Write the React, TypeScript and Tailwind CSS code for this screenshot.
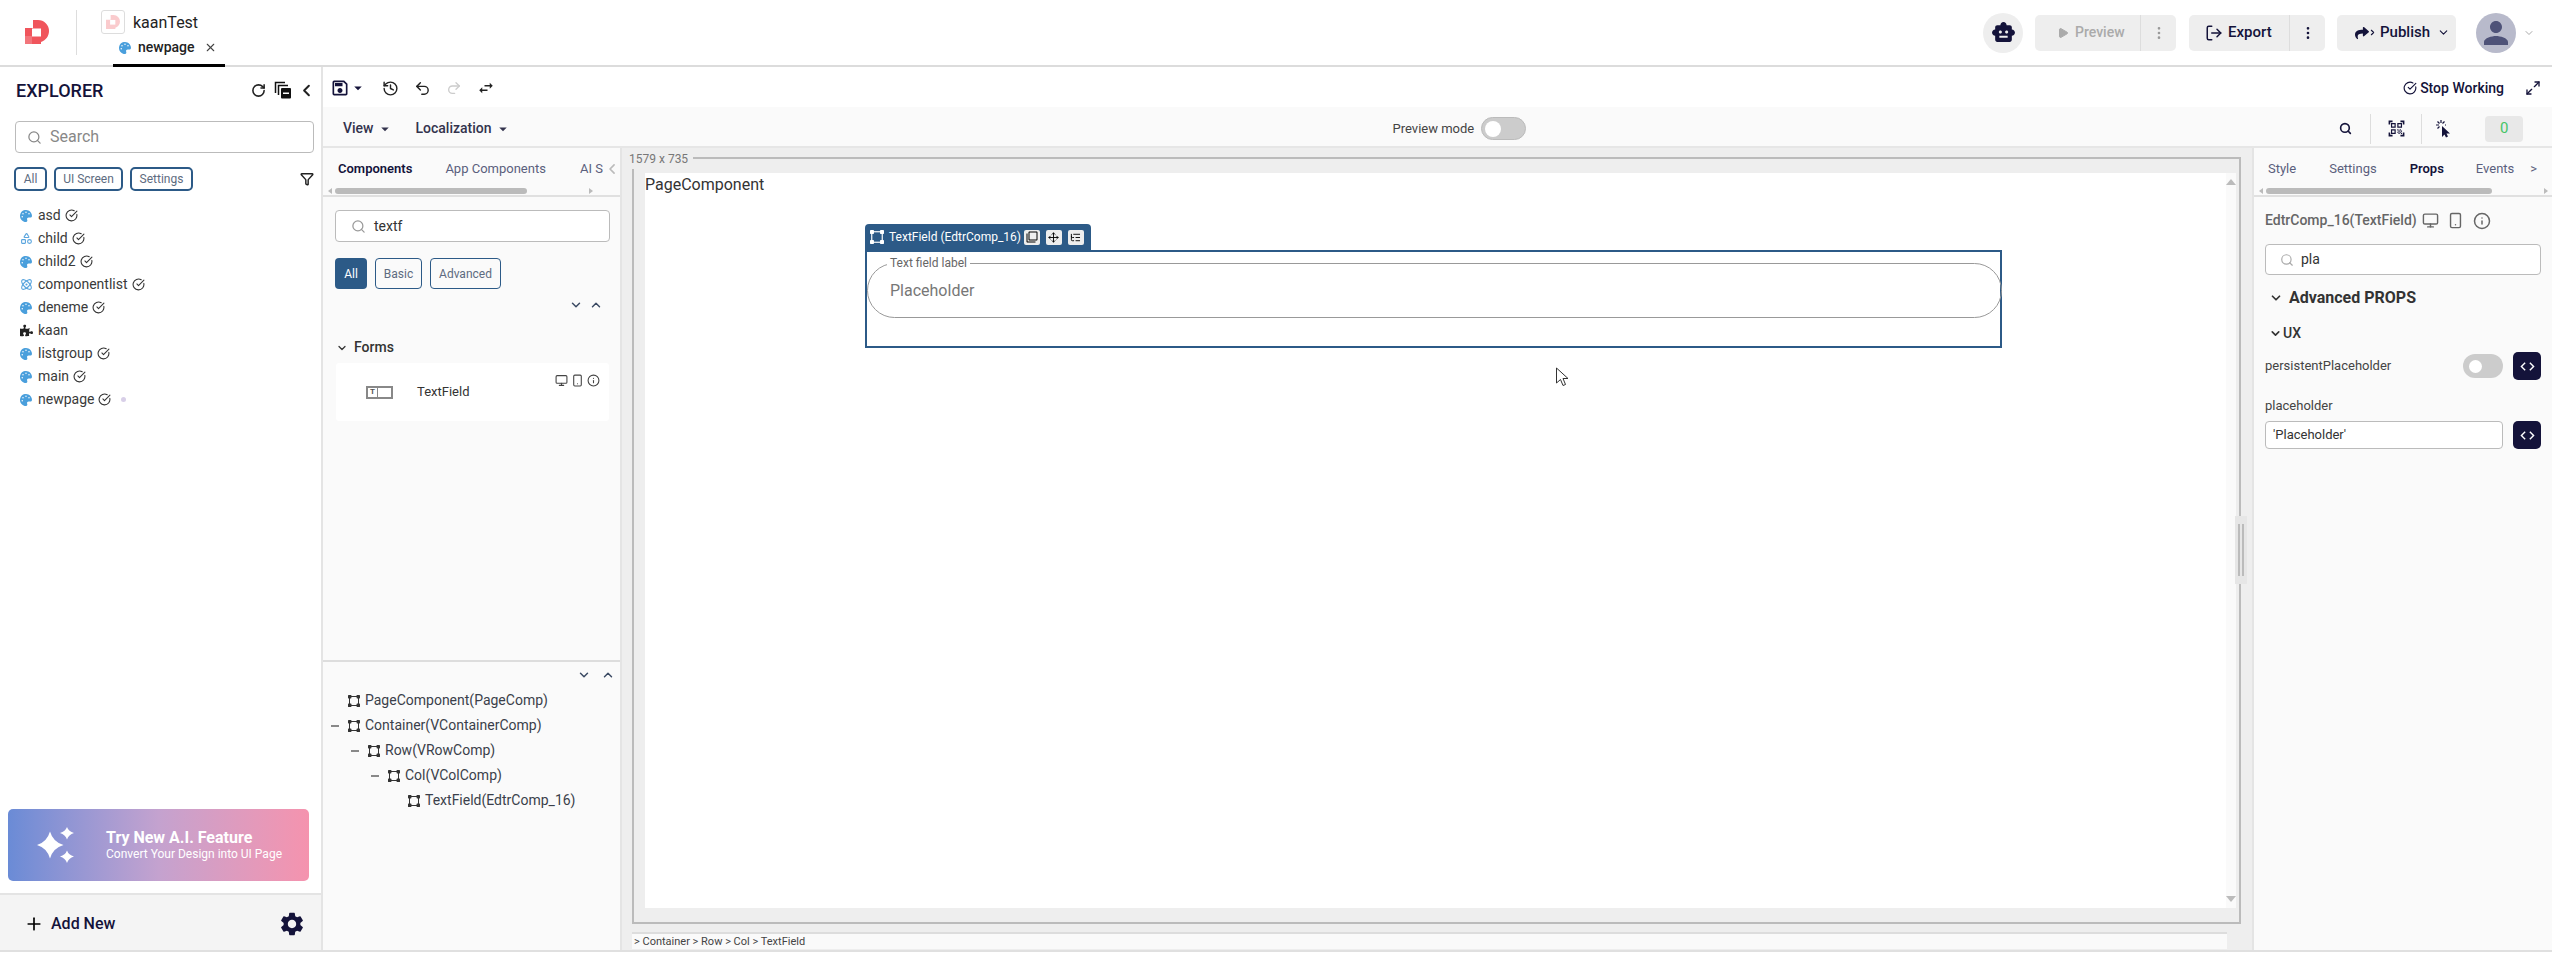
import React from "react";
import {
  RotateCw, ChevronLeft, ChevronRight, ChevronDown, ChevronUp, Search, CircleCheckBig, Shapes, Atom, X, History, Undo2, Redo2,
  Filter, Monitor, Smartphone, Info, Plus, Play, EllipsisVertical, LogOut, Move, ListTree, Maximize2,
} from "lucide-react";
import { FaPalette, FaPuzzlePiece, FaShare } from "react-icons/fa";
import { MdSmartToy, MdSettings, MdOutlineSave, MdSwapHoriz, MdOutlineQrCodeScanner, MdPerson, MdArrowDropDown, MdCode, MdFilterNone } from "react-icons/md";

const NodeIcon = ({ c = "#333", s = 12 }: { c?: string; s?: number }) => (
  <svg width={s} height={s} viewBox="0 0 12 12" className="shrink-0">
    <rect x="1.5" y="1.5" width="9" height="9" fill="none" stroke={c} strokeWidth="1" />
    <rect x="0" y="0" width="3.4" height="3.4" rx="0.6" fill={c} />
    <rect x="8.6" y="0" width="3.4" height="3.4" rx="0.6" fill={c} />
    <rect x="0" y="8.6" width="3.4" height="3.4" rx="0.6" fill={c} />
    <rect x="8.6" y="8.6" width="3.4" height="3.4" rx="0.6" fill={c} />
  </svg>
);

const Logo = () => (
  <svg width="24" height="24" viewBox="0 0 24 24">
    <path d="M8 0h5a11 11 0 0 1 11 11c0 5-3 9-8 11v2H0V8h8z" fill="#f0555c" />
    <path d="M0 16h7v8H0z" fill="#f2757b" />
    <rect x="7" y="8.500" width="9" height="8" fill="#fff" />
  </svg>
);

const Palette = () => <FaPalette size={12} color="#4a9fdc" className="shrink-0" />;
const files: [string, React.ReactNode, boolean][] = [
  ["asd", <Palette />, true],
  ["child", <Shapes size={13} color="#5aa5de" />, true],
  ["child2", <Palette />, true],
  ["componentlist", <Atom size={13} color="#5aa5de" />, true],
  ["deneme", <Palette />, true],
  ["kaan", <FaPuzzlePiece size={13} color="#222" />, false],
  ["listgroup", <Palette />, true],
  ["main", <Palette />, true],
  ["newpage", <Palette />, true],
];

const Chip = ({ t, w }: { t: string; w: string }) => (
  <div className={`h-[24px] ${w} flex items-center justify-center rounded-[5px] border-2 border-[#2c5a87] text-[12px] text-[#5d6b80]`}>{t}</div>
);

const CodeBtn = () => (
  <div className="w-[28px] h-[28px] rounded-[5px] bg-[#14133a] flex items-center justify-center">
    <MdCode size={17} color="#fff" />
  </div>
);

const ScrollBar = ({ right, thumb }: { right: string; thumb: string }) => (
  <div className="h-[9px] flex items-center pl-[5px] gap-[3px] relative">
    <div className="w-0 h-0 border-y-[3px] border-y-transparent border-r-[4px] border-r-[#bbb]" />
    <div className={`h-[6px] ${thumb} rounded-[3px] bg-[#bbb]`} />
    <div className={`absolute ${right} w-0 h-0 border-y-[3px] border-y-transparent border-l-[4px] border-l-[#bbb]`} />
  </div>
);

const Tree = ({ t, lvl, dash }: { t: string; lvl: string; dash?: boolean }) => (
  <div className={`h-[25px] flex items-center ${lvl} relative text-[14px] text-[#3a3f4a]`}>
    {dash && <div className="absolute -ml-[17px] w-[8px] h-[2px] bg-[#888]" />}
    <NodeIcon />
    <span className="ml-[5px]">{t}</span>
  </div>
);

export default function App() {
  return (
    <div className="w-[2552px] h-[954px] overflow-hidden bg-white flex flex-col font-['Roboto',sans-serif] text-[#222]">
      {/* header */}
      <header className="h-[67px] shrink-0 border-b-2 border-[#dcdcdc] flex items-center relative">
        <div className="ml-[25px] w-[24px] mt-[-1px]"><Logo /></div>
        <div className="ml-[27px] w-px h-[45px] bg-[#ddd] mt-[-1px]" />
        <div className="ml-[24px] self-stretch w-[300px] flex flex-col">
          <div className="flex items-center mt-[10px] h-[24px]">
            <div className="w-[24px] h-[24px] rounded-[3px] border border-[#ddd] flex items-center justify-center">
              <svg width="14" height="14" viewBox="0 0 24 24" opacity="0.3"><path d="M8 0h5a11 11 0 0 1 11 11c0 5-3 9-8 11v2H0V8h8z" fill="#f0555c" /><rect x="7" y="8.500" width="9" height="8" fill="#fff" /></svg>
            </div>
            <span className="ml-[8px] text-[16px] text-[#222] mt-[1px]">kaanTest</span>
          </div>
          <div className="mt-auto ml-[12px] w-[112px] h-[33px] border-b-[3px] border-black flex items-center pl-[6px] pb-[3px] -mb-[2px]">
            <Palette />
            <span className="ml-[7px] text-[14px] font-medium">newpage</span>
            <X size={13} className="ml-[9px] text-[#444]" />
          </div>
        </div>
        <div className="ml-auto flex items-center mr-[17px]">
          <div className="w-[40px] h-[40px] rounded-full bg-[#eee] flex items-center justify-center"><MdSmartToy size={25} color="#14133a" /></div>
          <div className="ml-[12px] w-[141px] h-[36px] rounded-[5px] bg-[#eee] flex items-center text-[#aaa]">
            <div className="w-[106px] border-r border-[#ddd] h-full flex items-center pl-[22px] text-[14px] font-medium">
              <Play size={12} fill="#aaa" className="mr-[6px]" />Preview
            </div>
            <EllipsisVertical size={16} className="ml-[10px]" color="#999" />
          </div>
          <div className="ml-[13px] w-[136px] h-[36px] rounded-[5px] bg-[#eee] flex items-center text-[#14133a]">
            <div className="w-[101px] border-r border-[#ddd] h-full flex items-center pl-[16px] text-[15px] font-medium">
              <LogOut size={18} className="mr-[5px]" />Export
            </div>
            <EllipsisVertical size={16} className="ml-[10px]" color="#14133a" />
          </div>
          <div className="ml-[12px] w-[119px] h-[36px] rounded-[5px] bg-[#eee] flex items-center pl-[18px] text-[15px] font-medium text-[#14133a]">
            <FaShare size={14} />
            <ChevronRight size={9} strokeWidth={3} className="-ml-[1px] mr-[3px]" />Publish
            <ChevronDown size={13} className="ml-[7px]" />
          </div>
          <div className="ml-[20px] w-[40px] h-[40px] rounded-full bg-[#b8bacb] flex items-center justify-center overflow-hidden"><MdPerson size={36} color="#4e5278" /></div>
          <ChevronDown size={12} className="ml-[7px] text-[#aaa]" />
        </div>
      </header>

      <div className="h-[885px] shrink-0 flex border-b-2 border-[#e0e0e0]">
        {/* sidebar */}
        <aside className="w-[323px] shrink-0 border-r-2 border-[#e4e4e4] flex flex-col">
          <div className="flex items-center h-[46px] pl-[16px] pr-[5px]">
            <span className="text-[18px] font-medium text-[#14133a]">EXPLORER</span>
            <RotateCw size={15} strokeWidth={2.5} className="ml-auto" />
            <svg width="18" height="18" viewBox="0 0 18 18" className="ml-[8px]">
              <path d="M1.500 12V1.500H11" fill="none" stroke="#111" strokeWidth="1.500" />
              <path d="M4.500 14V4.500H14" fill="none" stroke="#111" strokeWidth="1.500" />
              <rect x="7" y="7" width="10" height="10.500" rx="1" fill="#111" />
              <rect x="9" y="11.500" width="6" height="1.500" fill="#fff" />
            </svg>
            <ChevronLeft size={19} strokeWidth={2.5} className="ml-[5px]" />
          </div>
          <div className="mx-[15px] mt-[8px] h-[32px] w-[299px] rounded-[4px] border border-[#bbb] flex items-center pl-[11px] text-[16px] text-[#888]">
            <Search size={15} className="mr-[8px]" />Search
          </div>
          <div className="mt-[14px] pl-[14px] pr-[7px] flex items-center gap-[7px]">
            <Chip t="All" w="w-[33px]" />
            <Chip t="UI Screen" w="w-[69px]" />
            <Chip t="Settings" w="w-[63px]" />
            <Filter size={14} strokeWidth={2.5} className="ml-auto" />
          </div>
          <div className="mt-[13px] pl-[20px] flex flex-col">
            {files.map(([n, ic, ok]) => (
              <div key={n} className="h-[23px] flex items-center text-[14px] text-[#3a3a3a]">
                <span className="w-[18px] shrink-0 flex">{ic}</span>
                <span>{n}</span>
                {ok && <CircleCheckBig size={13} className="ml-[4px] text-[#333]" />}
                {n === "newpage" && <span className="ml-[10px] w-[5px] h-[5px] rounded-full bg-[#d8cfe8]" />}
              </div>
            ))}
          </div>
          <div className="mt-auto mx-[8px] mb-[12px] w-[301px] h-[72px] rounded-[5px] bg-gradient-to-r from-[#6a8bd6] via-[#c4a2cf] to-[#f593ae] flex items-center text-white">
            <svg width="37" height="36" viewBox="0 0 37 36" className="ml-[29px]" fill="#fff">
              <path d="M13 4.500Q16 15 26.500 18 16 21 13 31.500 10 21 0 18 10 15 13 4.500z" />
              <path d="M30 0q1.600 4.500 7 6-5.400 1.500-7 6.500-1.600-5-7-6.500 5.400-1.500 7-6z" />
              <path d="M30 23.500q1.600 4.500 7 6-5.400 1.500-7 6.500-1.600-5-7-6.500 5.400-1.500 7-6z" />
            </svg>
            <div className="ml-[32px] flex flex-col">
              <span className="text-[16px] font-bold leading-[19px]">Try New A.I. Feature</span>
              <span className="text-[12px] leading-[15px]">Convert Your Design into UI Page</span>
            </div>
          </div>
          <div className="h-[57px] bg-[#f4f4f4] border-t-2 border-[#e4e4e4] flex items-center pl-[24px] pr-[15px] pt-[3px] text-[16px] font-medium text-[#14133a]">
            <Plus size={20} className="text-black mr-[7px]" />Add New
            <MdSettings size={28} className="ml-auto" />
          </div>
        </aside>

        {/* main */}
        <main className="flex-1 min-w-0 flex flex-col">
          <div className="h-[40px] shrink-0 flex items-center pl-[7px] pr-[11px] pt-[2px]">
            <MdOutlineSave size={20} className="text-[#14133a]" />
            <MdArrowDropDown size={18} className="text-[#14133a] -ml-[1px]" />
            <History size={17} className="ml-[15px]" />
            <Undo2 size={17} className="ml-[15px]" />
            <Redo2 size={16} className="ml-[15px] text-[#ccc]" />
            <MdSwapHoriz size={18} className="ml-[15px]" />
            <div className="ml-auto flex items-center text-[14px] font-medium text-[#14133a]">
              <CircleCheckBig size={14} className="mr-[3px]" />Stop Working
            </div>
            <Maximize2 size={16} className="ml-[21px] text-[#14133a]" />
          </div>
          <div className="h-[41px] shrink-0 bg-[#fafafa] border-b-2 border-[#e6e6e6] flex items-center pl-[20px] pt-[4px] text-[14px] font-medium text-[#33334d]">
            <span>View</span><MdArrowDropDown size={18} className="ml-[2px]" />
            <span className="ml-[22px]">Localization</span><MdArrowDropDown size={18} className="ml-[2px]" />
            <span className="ml-[881px] text-[13px] font-normal text-[#444]">Preview mode</span>
            <div className="ml-[7px] w-[45px] h-[23px] rounded-full bg-[#ccc] border border-[#bbb] flex items-center pl-[3px]">
              <div className="w-[16px] h-[16px] rounded-full bg-white" />
            </div>
            <Search size={13} strokeWidth={3} className="ml-[813px] text-[#14133a]" />
            <div className="ml-[18px] w-px h-[30px] bg-[#ddd]" />
            <MdOutlineQrCodeScanner size={19} className="ml-[16px] text-[#14133a]" />
            <div className="ml-[15px] w-px h-[30px] bg-[#ddd]" />
            <svg width="16" height="18" viewBox="0 0 16 18" className="ml-[14px]">
              <path d="M6 6v11l2.500-2.500 1.500 3 2-1-1.500-3H14z" fill="#14133a" />
              <path d="M5 0v3M0 5h3M1.500 1.500l2 2M8.500 1.500l-2 2M1.500 8.500l2-2M10 5h-1" stroke="#14133a" strokeWidth="1.200" fill="none" />
            </svg>
            <div className="ml-[33px] w-[38px] h-[26px] rounded-[4px] bg-[#e8e8e8] flex items-center justify-center text-[15px] font-normal text-[#45c467]">0</div>
          </div>
          <div className="flex-1 min-h-0 flex">
            {/* components */}
            <section className="w-[299px] shrink-0 bg-[#fafafa] border-r-2 border-[#e4e4e4] flex flex-col">
              <div className="h-[49px] shrink-0 border-b-2 border-[#e0e0e0] flex flex-col overflow-hidden">
                <div className="h-[38px] shrink-0 flex items-center pl-[15px] pt-[3px] text-[13px] text-[#5a5f7d] relative whitespace-nowrap">
                  <span className="font-semibold text-[#14133a]">Components</span>
                  <span className="ml-[33px]">App Components</span>
                  <span className="ml-[34px]">AI S</span>
                  <ChevronLeft size={18} strokeWidth={2.5} className="ml-[1px] text-[#bbb]" />
                </div>
                <ScrollBar right="left-[266px]" thumb="w-[192px]" />
              </div>
              <div className="mx-[12px] mt-[13px] h-[32px] w-[275px] rounded-[4px] border border-[#bbb] bg-white flex items-center pl-[15px] text-[14px] text-[#333]">
                <Search size={15} className="mr-[8px] text-[#999]" />textf
              </div>
              <div className="mt-[16px] pl-[12px] flex gap-[8px] text-[12px]">
                <div className="w-[32px] h-[31px] rounded-[4px] bg-[#2c5a87] text-white flex items-center justify-center">All</div>
                <div className="w-[47px] h-[31px] rounded-[4px] border border-[#2c5a87] text-[#5d6b80] flex items-center justify-center">Basic</div>
                <div className="w-[71px] h-[31px] rounded-[4px] border border-[#2c5a87] text-[#5d6b80] flex items-center justify-center">Advanced</div>
              </div>
              <div className="mt-[9px] flex justify-end gap-[6px] pr-[17px] text-[#3b4a63]">
                <ChevronDown size={14} strokeWidth={2.5} /><ChevronUp size={14} strokeWidth={2.5} />
              </div>
              <div className="mt-[25px] pl-[13px] flex items-center text-[14px] font-medium text-[#333]">
                <ChevronDown size={12} strokeWidth={2.5} className="mr-[6px]" />Forms
              </div>
              <div className="mt-[5px] mx-[13px] w-[273px] h-[58px] rounded-[3px] bg-white flex items-center relative text-[13px] text-[#333]">
                <div className="ml-[30px] w-[27px] h-[13px] border-2 border-[#888] flex items-center">
                  <span className="text-[8px] leading-none font-bold w-[10px] h-full border-r border-[#888] flex items-center justify-center text-[#555]">T</span>
                </div>
                <span className="ml-[24px]">TextField</span>
                <div className="absolute right-[9px] top-[11px] flex items-center gap-[3px] text-[#444]">
                  <Monitor size={13} /><Smartphone size={13} /><Info size={13} />
                </div>
              </div>
              <div className="mt-auto h-[290px] shrink-0 border-t-2 border-[#ddd] flex flex-col">
                <div className="mt-[6px] flex justify-end gap-[10px] pr-[5px] text-[#3b4a63]">
                  <ChevronDown size={14} strokeWidth={2.5} /><ChevronUp size={14} strokeWidth={2.5} />
                </div>
                <div className="mt-[6px]">
                  <Tree t="PageComponent(PageComp)" lvl="pl-[25px]" />
                  <Tree t="Container(VContainerComp)" lvl="pl-[25px]" dash />
                  <Tree t="Row(VRowComp)" lvl="pl-[45px]" dash />
                  <Tree t="Col(VColComp)" lvl="pl-[65px]" dash />
                  <Tree t="TextField(EdtrComp_16)" lvl="pl-[85px]" />
                </div>
              </div>
            </section>

            {/* canvas */}
            <section className="flex-1 min-w-0 bg-[#eeeeee] pl-[10px] pr-[11px] pt-[9px] flex flex-col relative">
              <div className="h-[767px] shrink-0 border-2 border-[#bbb] pl-[11px] pr-[3px] pt-[14px] pb-[14px] relative">
                <div className="absolute -left-[7px] -top-[10px] bg-[#eeeeee] pl-[2px] pr-[5px] text-[12px] leading-[20px] text-[#777]">1579 x 735</div>
                <div className="h-full bg-white flex">
                  <div className="flex-1 min-w-0 relative">
                    <div className="text-[16px] leading-[24px] text-[#333]">PageComponent</div>
                    <div className="ml-[220px] mt-[53px] w-[1137px] h-[98px] border-[2px] border-[#2c5a87] relative">
                      <div className="absolute -left-[2px] -top-[28px] w-[226px] h-[26px] rounded-t-[4px] bg-[#2c5a87] flex items-center pl-[5px] text-[12px] text-white whitespace-nowrap">
                        <NodeIcon c="#fff" s={14} />
                        <span className="ml-[5px]">TextField (EdtrComp_16)</span>
                        <span className="ml-[3px] w-[16px] h-[15px] rounded-[2px] bg-[#eee] text-black flex items-center justify-center"><MdFilterNone size={12} /></span>
                        <span className="ml-[6px] w-[16px] h-[15px] rounded-[2px] bg-[#eee] text-black flex items-center justify-center"><Move size={11} /></span>
                        <span className="ml-[6px] w-[16px] h-[15px] rounded-[2px] bg-[#eee] text-black flex items-center justify-center"><ListTree size={11} /></span>
                      </div>
                      <fieldset className="mt-[4px] -mr-[2px] h-[62px] rounded-[28px] border border-[#999] pl-[19px]">
                        <legend className="px-[3px] text-[12px] leading-[14px] text-[#666]">Text field label</legend>
                        <div className="pl-[3px] mt-[9px] text-[16px] leading-[24px] text-[#777]">Placeholder</div>
                      </fieldset>
                    </div>
                    <svg width="16" height="22" viewBox="0 0 16 22" className="absolute left-[910px] top-[194px]">
                      <path d="M1.500 1v15l4-3.500 2.500 6 2.500-1-2.500-6h5z" fill="#fff" stroke="#333" strokeWidth="1" />
                    </svg>
                  </div>
                  <div className="w-[10px] shrink-0 bg-[#fafafa] flex flex-col justify-between items-center py-[6px]">
                    <div className="w-0 h-0 border-x-[5px] border-x-transparent border-b-[6px] border-b-[#bbb]" />
                    <div className="w-0 h-0 border-x-[5px] border-x-transparent border-t-[6px] border-t-[#bbb]" />
                  </div>
                </div>
                <div className="absolute -right-[8px] top-[357px] w-[12px] h-[68px] bg-[#e6e6e6] flex items-center justify-center gap-[2px]">
                  <div className="w-[2px] h-[52px] bg-[#bbb]" />
                  <div className="w-[2px] h-[52px] bg-[#bbb]" />
                </div>
              </div>
              <div className="mt-[8px] mr-[14px] h-[17px] border-t-2 border-[#ddd] bg-[#fafafa] pl-[2px] text-[11px] leading-[15px] text-[#444]">&gt; Container &gt; Row &gt; Col &gt; TextField</div>
            </section>

            {/* right */}
            <section className="w-[300px] shrink-0 bg-[#fafafa] border-l-2 border-[#e4e4e4] flex flex-col">
              <div className="h-[49px] shrink-0 border-b-2 border-[#e0e0e0] flex flex-col overflow-hidden">
                <div className="h-[38px] shrink-0 flex items-center pl-[14px] pt-[3px] text-[13px] text-[#5a5f7d] whitespace-nowrap">
                  <span>Style</span>
                  <span className="ml-[33px]">Settings</span>
                  <span className="ml-[33px] font-semibold text-[#14133a]">Props</span>
                  <span className="ml-[32px]">Events</span>
                  <span className="ml-[16px]">&gt;</span>
                </div>
                <ScrollBar right="left-[290px]" thumb="w-[226px]" />
              </div>
              <div className="mt-[13px] pl-[11px] flex items-center text-[14px] font-medium text-[#666] whitespace-nowrap">
                EdtrComp_16(TextField)
                <Monitor size={17} className="ml-[5px]" /><Smartphone size={17} className="ml-[8px]" /><Info size={18} className="ml-[9px]" />
              </div>
              <div className="mt-[13px] ml-[11px] h-[31px] w-[276px] rounded-[4px] border border-[#bbb] bg-white flex items-center pl-[14px] text-[14px] text-[#333]">
                <Search size={14} className="mr-[7px] text-[#aaa]" />pla
              </div>
              <div className="mt-[11px] pl-[15px] flex items-center text-[16px] font-bold text-[#333]">
                <ChevronDown size={14} strokeWidth={3} className="mr-[6px]" />Advanced PROPS
              </div>
              <div className="mt-[13px] pl-[15px] flex items-center text-[14px] font-medium text-[#333]">
                <ChevronDown size={13} strokeWidth={3} className="mr-[1px]" />UX
              </div>
              <div className="mt-[8px] pl-[11px] flex items-center text-[13px] text-[#444]">
                <span>persistentPlaceholder</span>
                <div className="ml-auto w-[40px] h-[24px] rounded-full bg-[#ccc] flex items-center pl-[6px]"><div className="w-[13px] h-[13px] rounded-full bg-white" /></div>
                <div className="ml-[10px] mr-[11px]"><CodeBtn /></div>
              </div>
              <div className="mt-[18px] pl-[11px] text-[13px] text-[#444] leading-[16px]">placeholder</div>
              <div className="mt-[7px] pl-[11px] pr-[11px] flex items-center gap-[10px]">
                <div className="flex-1 h-[28px] rounded-[4px] border border-[#bbb] bg-white flex items-center pl-[7px] text-[13px] text-[#333]">'Placeholder'</div>
                <CodeBtn />
              </div>
            </section>
          </div>
        </main>
      </div>
    </div>
  );
}
